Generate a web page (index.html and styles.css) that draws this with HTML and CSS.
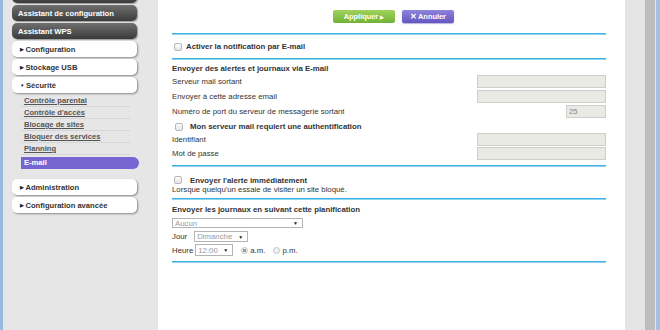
FILE: index.html
```html
<!DOCTYPE html>
<html lang="fr">
<head>
    <meta charset="UTF-8">
    <title>E-mail</title>
    <link rel="stylesheet" href="styles.css">
</head>
<body>
    <div class="frame-left"></div>

    <nav class="sidebar">
        <a class="nav-btn nav-dark nav-cut" href="#"></a>
        <a class="nav-btn nav-dark" href="#">Assistant de configuration</a>
        <a class="nav-btn nav-dark" href="#">Assistant WPS</a>
        <a class="nav-btn nav-light" href="#"><span class="arrow">&#9654;</span>Configuration</a>
        <a class="nav-btn nav-light" href="#"><span class="arrow">&#9654;</span>Stockage USB</a>
        <a class="nav-btn nav-light" href="#"><span class="arrow">&#9660;</span>Sécurité</a>
        <ul class="sub-menu">
            <li><a class="sub-link" href="#">Contrôle parental</a></li>
            <li><a class="sub-link" href="#">Contrôle d'accès</a></li>
            <li><a class="sub-link" href="#">Blocage de sites</a></li>
            <li><a class="sub-link" href="#">Bloquer des services</a></li>
            <li><a class="sub-link" href="#">Planning</a></li>
            <li><a class="sub-link sub-active" href="#">E-mail</a></li>
        </ul>
        <a class="nav-btn nav-light" href="#"><span class="arrow">&#9654;</span>Administration</a>
        <a class="nav-btn nav-light" href="#"><span class="arrow">&#9654;</span>Configuration avancée</a>
    </nav>

    <main class="main">
        <div class="toolbar">
            <button class="btn btn-apply" type="button">Appliquer <span class="btn-arrow">&#9654;</span></button>
            <button class="btn btn-cancel" type="button"><span class="btn-x">&#10005;</span>Annuler</button>
        </div>

        <div class="rule"></div>

        <div class="check-row row-notify">
            <span class="check"></span>
            <strong>Activer la notification par E-mail</strong>
        </div>

        <div class="rule rule-tight"></div>

        <div class="section-title">Envoyer des alertes et journaux via E-mail</div>

        <div class="field-row">
            <span>Serveur mail sortant</span>
            <span class="field"></span>
        </div>
        <div class="field-row">
            <span>Envoyer à cette adresse email</span>
            <span class="field"></span>
        </div>
        <div class="field-row">
            <span>Numéro de port du serveur de messagerie sortant</span>
            <span class="field field-port">25</span>
        </div>

        <div class="check-row row-auth">
            <span class="check"></span>
            <strong>Mon serveur mail requiert une authentification</strong>
        </div>

        <div class="field-row field-row-sm">
            <span>Identifiant</span>
            <span class="field"></span>
        </div>
        <div class="field-row field-row-sm">
            <span>Mot de passe</span>
            <span class="field"></span>
        </div>

        <div class="rule rule-auth"></div>

        <div class="alert-block">
            <div class="check-row row-alert">
                <span class="check"></span>
                <strong>Envoyer l'alerte immédiatement</strong>
            </div>
            <div class="hint">Lorsque quelqu'un essaie de visiter un site bloqué.</div>
        </div>

        <div class="rule rule-alert"></div>

        <div class="schedule">
            <div class="schedule-title">Envoyer les journaux en suivant cette planification</div>
            <div class="select select-freq"><span>Aucun</span><span class="select-arrow">&#9660;</span></div>
            <div class="inline-row row-day">
                <span>Jour</span>
                <div class="select select-day"><span>Dimanche</span><span class="select-arrow">&#9660;</span></div>
            </div>
            <div class="inline-row row-hour">
                <span>Heure</span>
                <div class="select select-hour"><span>12:00</span><span class="select-arrow">&#9660;</span></div>
                <span class="radio checked"></span><span>a.m.</span>
                <span class="radio"></span><span>p.m.</span>
            </div>
        </div>

        <div class="rule rule-end"></div>
    </main>

    <div class="gutter"></div>
    <div class="scroll"></div>
    <div class="frame-right"></div>
</body>
</html>
```

FILE: styles.css
```css
* { box-sizing: border-box; }
html, body {
    margin: 0;
    height: 100%;
}
body {
    display: flex;
    font-family: "Liberation Sans", Arial, sans-serif;
    background-color: #e6e6e6;
    overflow: hidden;
}
.frame-left { width: 3px; background-color: #9ab9dd; }
.gutter { width: 20px; background-color: #e4e4e4; }
.scroll { width: 10px; background-color: #bcbcbc; }
.frame-right {
    width: 5px;
    background-color: #a4c0e3;
    border-left: 1px solid #dfe9f5;
}

/* Menu de gauche */
.sidebar {
    width: 155px;
    padding-left: 9px;
    background-color: #e6e6e6;
}
.nav-btn {
    display: flex;
    align-items: center;
    width: 125px;
    height: 16px;
    margin-bottom: 2px;
    border-radius: 5px;
    font-size: 7.6px;
    font-weight: bold;
    text-decoration: none;
}
.nav-dark {
    padding-left: 6px;
    color: #fff;
    background: linear-gradient(#6f6f6f, #3b3b3b);
    box-shadow: 1px 1px 1px #9a9a9a;
}
.nav-cut { margin-top: -13px; }
.nav-light {
    padding-left: 8px;
    color: #333;
    background-color: #fff;
    box-shadow: 1px 1px 2px #8a8a8a;
}
.arrow {
    font-size: 4.5px;
    margin-right: 1.5px;
    color: #222;
}
.sub-menu {
    list-style: none;
    margin: 0 0 10px 9px;
    padding: 0;
}
.sub-link {
    display: block;
    width: 109px;
    height: 12px;
    line-height: 11px;
    padding-left: 3px;
    border-bottom: 1px solid #d6d6d6;
    color: #555;
    font-size: 7.6px;
    font-weight: bold;
}
.sub-active {
    width: 118px;
    margin-top: 2px;
    line-height: 12px;
    border-bottom: none;
    border-radius: 0 6px 6px 0;
    background-color: #7766d2;
    color: #fff;
    text-decoration: none;
}

/* Contenu */
.main {
    width: 467px;
    padding: 10px 19px 0 14px;
    background-color: #fff;
    color: #333;
    font-size: 7.8px;
}
.toolbar {
    display: flex;
    justify-content: center;
    gap: 7px;
    height: 13px;
    padding-left: 9px;
}
.btn {
    display: flex;
    align-items: center;
    justify-content: center;
    height: 13px;
    padding: 0;
    border: none;
    border-radius: 2px;
    color: #fff;
    font-family: inherit;
    font-size: 7.4px;
    font-weight: bold;
}
.btn-apply {
    width: 62px;
    background: linear-gradient(#a1d35c, #71b236);
}
.btn-arrow { font-size: 5px; margin-left: 2px; }
.btn-cancel {
    width: 52px;
    background: linear-gradient(#8e83dd, #6556be);
    box-shadow: 0 1px 1px #b9b3e0;
}
.btn-x { font-size: 8px; margin-right: 1px; }
.rule {
    height: 2px;
    margin-top: 10px;
    background-color: #3ab3e4;
    border-bottom: 1px solid #8fd3ef;
}
.rule-tight { margin-top: 0; }
.rule-auth { margin-top: 4px; }
.rule-alert { margin-top: 4px; }
.rule-end { margin-top: 5px; }

.check-row {
    display: flex;
    align-items: center;
}
.check {
    width: 8px;
    height: 8px;
    margin: 0 4px 0 2px;
    border: 1px solid #b8b8b8;
    border-radius: 2px;
    background: linear-gradient(#fdfdfd, #e4e4e4);
}
.row-notify { height: 23px; }
.row-auth { height: 13px; }
.row-auth .check { margin: 0 7px 0 3px; }
.row-alert .check { margin-right: 8px; }

.section-title {
    height: 15px;
    padding-top: 4px;
    font-weight: bold;
}
.field-row {
    display: flex;
    justify-content: space-between;
    height: 15px;
}
.field-row span:first-child { line-height: 13px; }
.field-row-sm { height: 14px; }
.field {
    width: 129px;
    height: 13px;
    background-color: #eaeae4;
    border: 1px solid #cfcfca;
}
.field-port {
    width: 40px;
    padding-left: 2px;
    line-height: 11px;
    color: #888;
}

.alert-block { padding-top: 8px; }
.row-alert { height: 10px; }
.hint { height: 9px; line-height: 9px; }

.schedule { padding-top: 5px; }
.schedule-title {
    height: 10px;
    line-height: 10px;
    font-weight: bold;
}
.select {
    display: flex;
    align-items: center;
    justify-content: space-between;
    height: 11px;
    padding: 0 4px 0 2px;
    border: 1px solid #b4b4b4;
    color: #999;
    background-color: #fff;
}
.select-arrow { font-size: 5px; color: #222; }
.select-freq { width: 131px; height: 10px; margin-top: 3px; }
.inline-row {
    display: flex;
    align-items: center;
    gap: 4px;
}
.row-day { margin-top: 3px; height: 11px; }
.select-day { width: 54px; margin-left: 3px; }
.row-hour { margin-top: 2px; height: 12px; }
.select-hour { width: 38px; height: 12px; margin-left: -2px; }
.radio {
    width: 7px;
    height: 7px;
    margin-left: 4px;
    margin-right: -2px;
    border: 1px solid #c4c4c4;
    border-radius: 50%;
    background-color: #f0f0f0;
}
.radio.checked { background: radial-gradient(circle, #999 0 1.4px, #f0f0f0 1.8px); }
```
